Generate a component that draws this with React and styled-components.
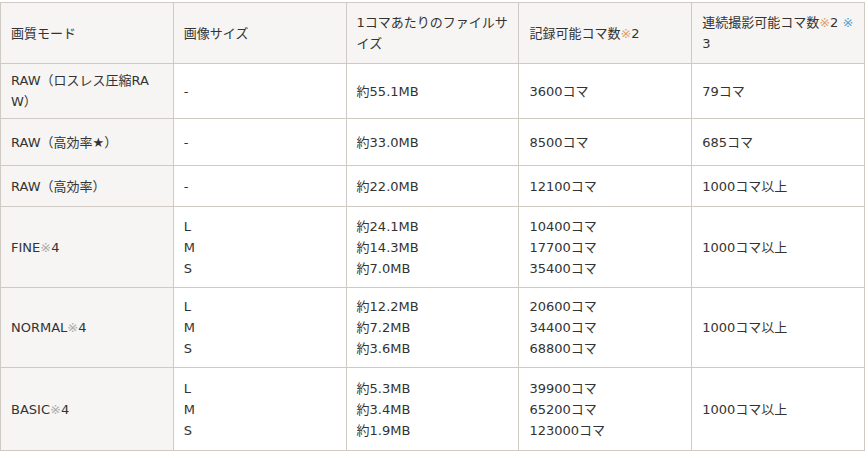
import React from "react";
import styled, { createGlobalStyle } from "styled-components";

const GlobalStyle = createGlobalStyle`
  html, body {
    margin: 0;
    padding: 0;
    background: #fff;
  }
  body {
    font-family: "DejaVu Sans", "Noto Sans CJK JP", sans-serif;
    font-size: 13px;
    color: #333;
  }
`;

const Wrap = styled.div`
  padding: 2px 0 0 0;
`;

const Table = styled.table`
  width: 865px;
  border-collapse: collapse;
  table-layout: fixed;
  line-height: 21px;
`;

const Row = styled.tr`
  height: ${(p) => p.$h}px;
`;

const Th = styled.th`
  background: #f6f5f3;
  border: 1px solid #cfcbc4;
  font-weight: normal;
  text-align: left;
  vertical-align: middle;
  padding: 5px 10px;
`;

const Td = styled.td`
  background: ${(p) => (p.$head ? "#f6f5f3" : "#fff")};
  border: 1px solid #cfcbc4;
  vertical-align: middle;
  padding: 5px 10px;
`;

const Note = styled.span`
  color: ${(p) => p.$c || "#aaa"};
`;

const Line = styled.div`
  line-height: 21px;
`;

const Lines = ({ items }) =>
  items.map((t) => <Line key={t}>{t}</Line>);

const rows = [
  {
    h: 55,
    mode: (
      <>
        RAW（ロスレス圧縮RA
        <br />
        W）
      </>
    ),
    size: ["-"],
    file: ["約55.1MB"],
    rec: ["3600コマ"],
    burst: "79コマ",
  },
  { h: 47, mode: "RAW（高効率★）", size: ["-"], file: ["約33.0MB"], rec: ["8500コマ"], burst: "685コマ" },
  { h: 41, mode: "RAW（高効率）", size: ["-"], file: ["約22.0MB"], rec: ["12100コマ"], burst: "1000コマ以上" },
  {
    h: 81,
    mode: (
      <>
        FINE<Note>※</Note>4
      </>
    ),
    size: ["L", "M", "S"],
    file: ["約24.1MB", "約14.3MB", "約7.0MB"],
    rec: ["10400コマ", "17700コマ", "35400コマ"],
    burst: "1000コマ以上",
  },
  {
    h: 80,
    mode: (
      <>
        NORMAL<Note>※</Note>4
      </>
    ),
    size: ["L", "M", "S"],
    file: ["約12.2MB", "約7.2MB", "約3.6MB"],
    rec: ["20600コマ", "34400コマ", "68800コマ"],
    burst: "1000コマ以上",
  },
  {
    h: 83,
    mode: (
      <>
        BASIC<Note>※</Note>4
      </>
    ),
    size: ["L", "M", "S"],
    file: ["約5.3MB", "約3.4MB", "約1.9MB"],
    rec: ["39900コマ", "65200コマ", "123000コマ"],
    burst: "1000コマ以上",
  },
];

export default function App() {
  return (
    <>
      <GlobalStyle />
      <Wrap>
        <Table>
          <thead>
            <Row $h={61}>
              <Th>画質モード</Th>
              <Th>画像サイズ</Th>
              <Th>
                1コマあたりのファイルサ
                <br />
                イズ
              </Th>
              <Th>
                記録可能コマ数<Note $c="#e0a070">※</Note>2
              </Th>
              <Th>
                連続撮影可能コマ数<Note $c="#e0a070">※</Note>2 <Note $c="#60a0c8">※</Note>
                <br />3
              </Th>
            </Row>
          </thead>
          <tbody>
            {rows.map((r, i) => (
              <Row key={i} $h={r.h}>
                <Td $head>{r.mode}</Td>
                <Td>
                  <Lines items={r.size} />
                </Td>
                <Td>
                  <Lines items={r.file} />
                </Td>
                <Td>
                  <Lines items={r.rec} />
                </Td>
                <Td>{r.burst}</Td>
              </Row>
            ))}
          </tbody>
        </Table>
      </Wrap>
    </>
  );
}
